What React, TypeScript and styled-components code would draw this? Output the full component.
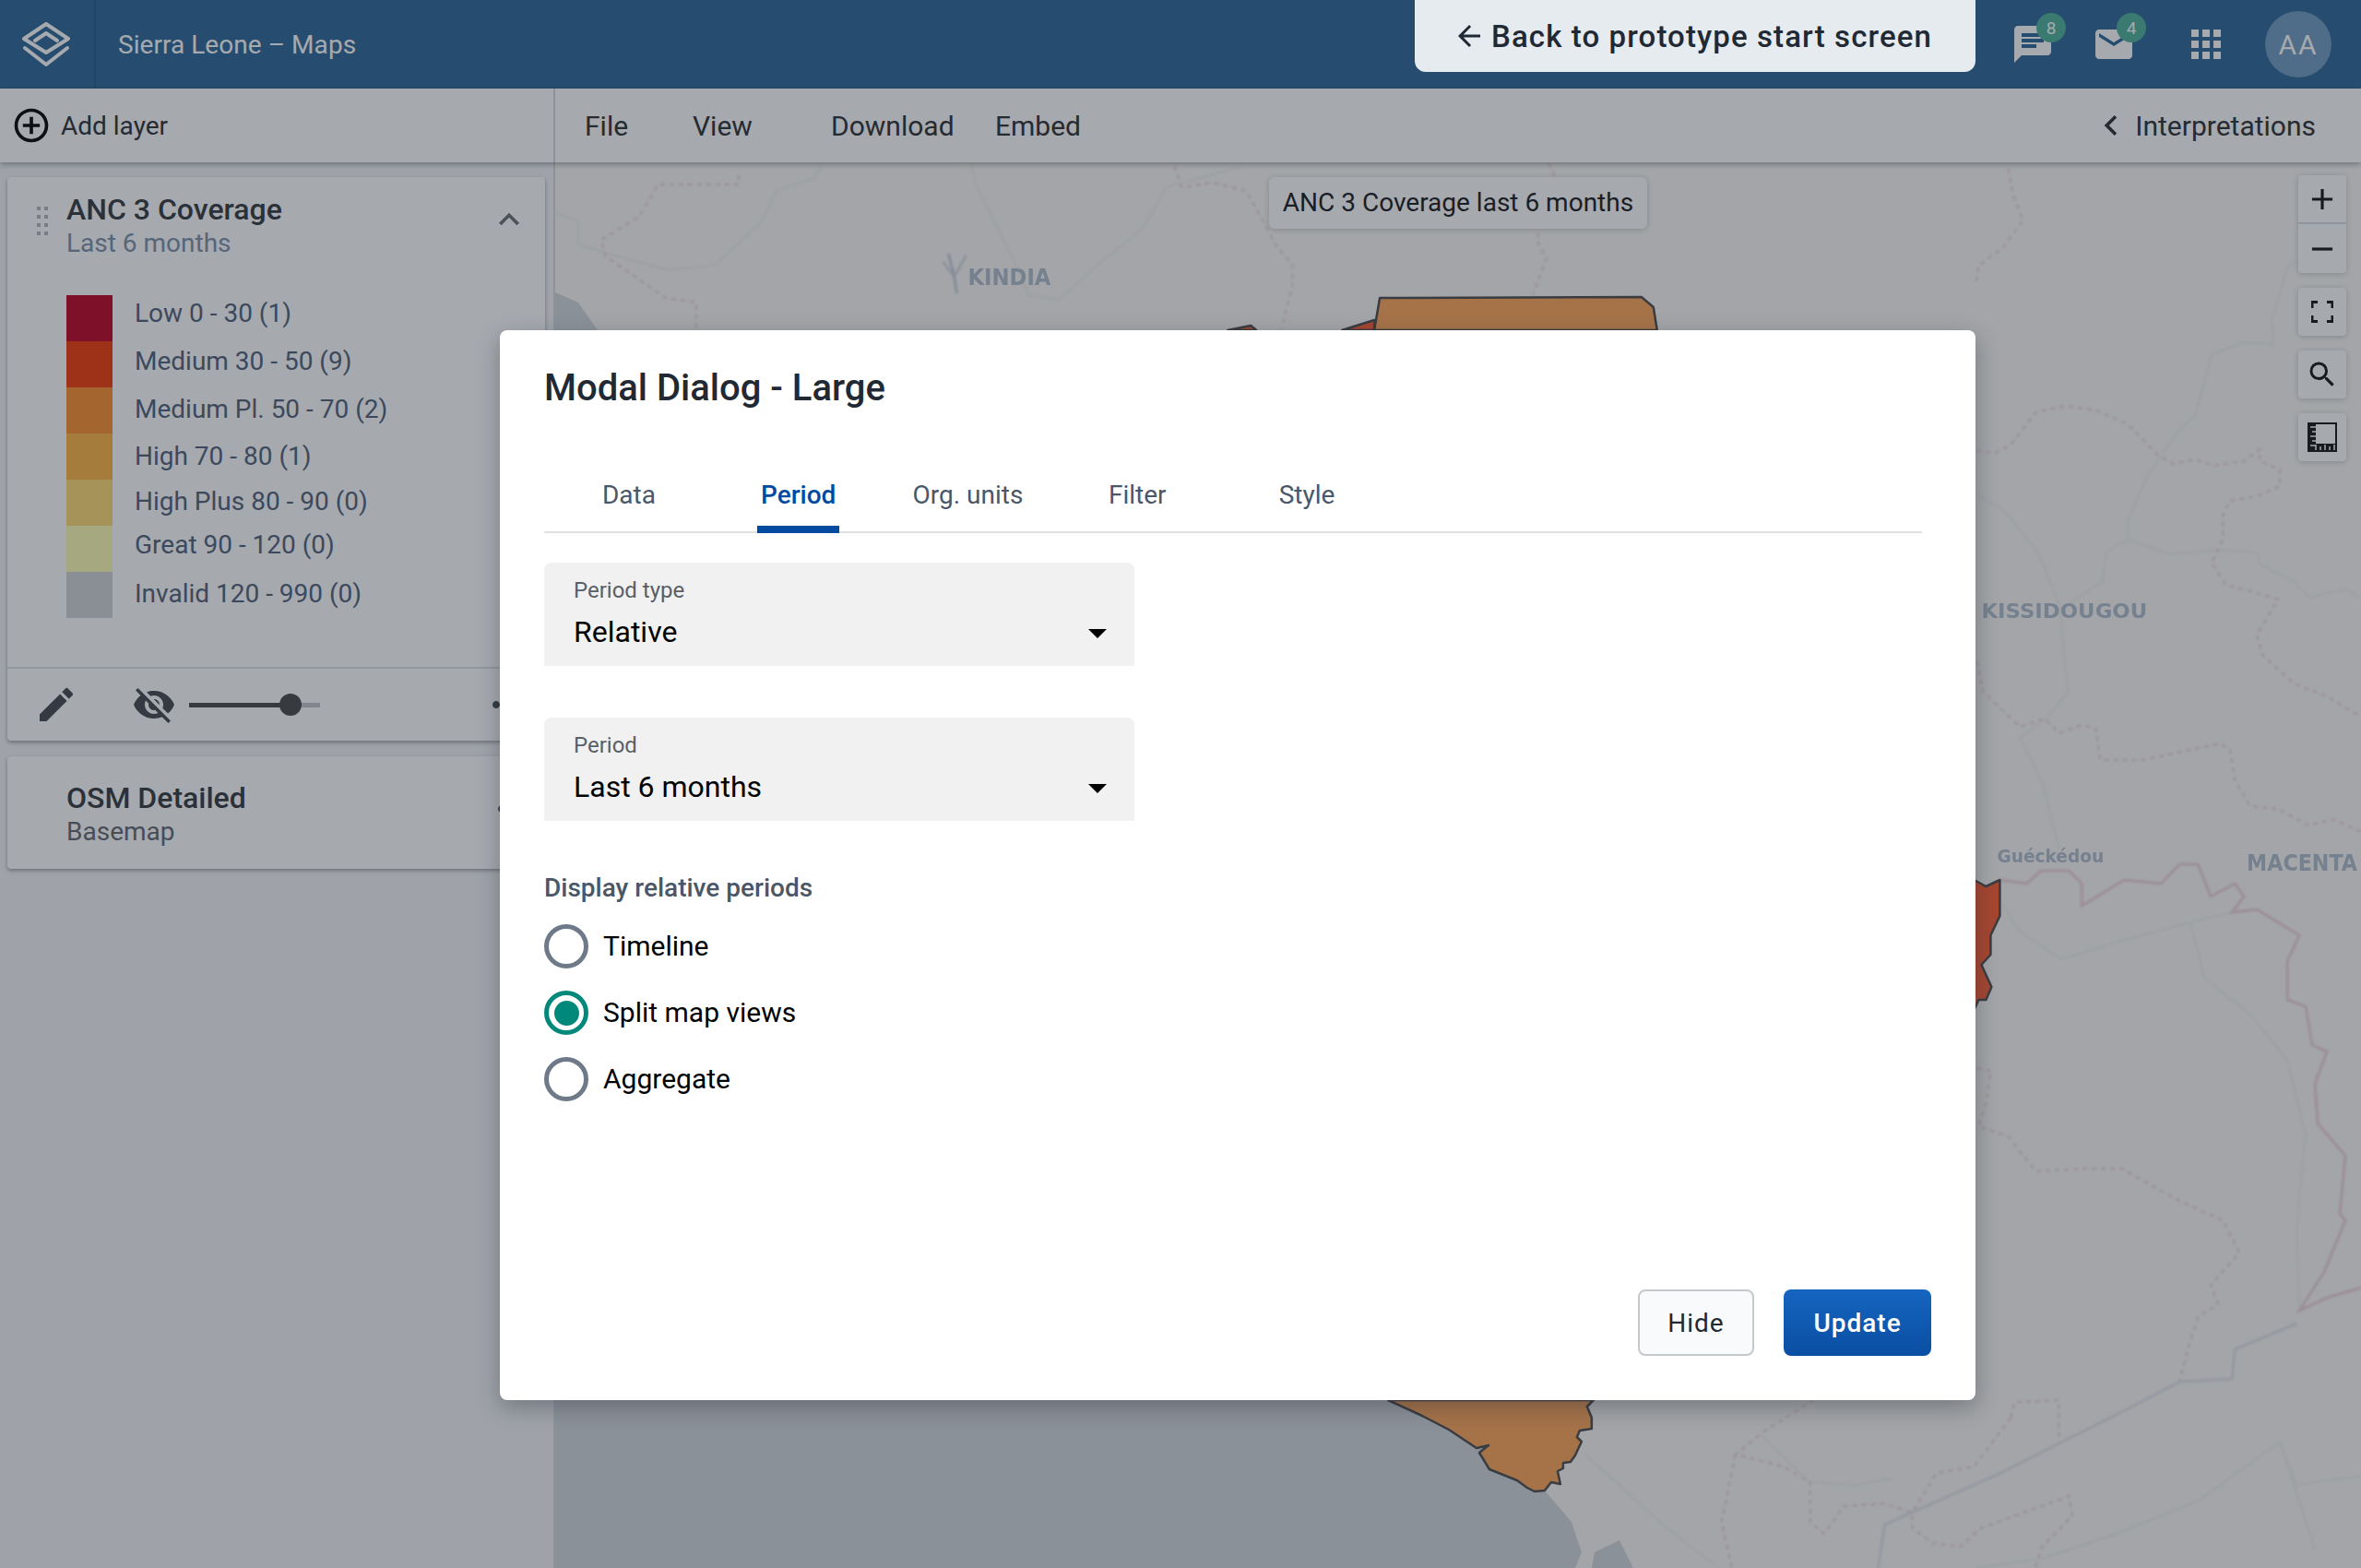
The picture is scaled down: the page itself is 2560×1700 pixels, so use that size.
import React from "react";
import styled, { createGlobalStyle } from "styled-components";
import {
  MdAdd,
  MdAddCircleOutline,
  MdApps,
  MdArrowBack,
  MdChat,
  MdChevronLeft,
  MdEdit,
  MdEmail,
  MdKeyboardArrowUp,
  MdMoreHoriz,
  MdRemove,
  MdSearch,
  MdVisibilityOff,
} from "react-icons/md";

const GlobalStyle = createGlobalStyle`
  html, body {
    margin: 0;
    padding: 0;
    background: #fff;
  }
  * {
    box-sizing: border-box;
  }
`;

const Page = styled.div`
  color: #212934;
  display: flex;
  flex-direction: column;
  font-family: Roboto, "Liberation Sans", sans-serif;
  height: 1700px;
  overflow: hidden;
  position: relative;
  width: 2560px;
`;

const Header = styled.header`
  align-items: center;
  background: #2b6696;
  color: #fff;
  display: flex;
  flex: none;
  height: 96px;
`;

const LogoCell = styled.div`
  align-items: center;
  border-right: 2px solid #245a85;
  display: flex;
  height: 96px;
  justify-content: center;
  padding-right: 2px;
  width: 104px;
`;

const AppTitle = styled.div`
  font-size: 28px;
  letter-spacing: 0.05px;
  margin-left: 24px;
`;

const BackButton = styled.a`
  align-items: center;
  align-self: flex-start;
  background: #e6ebf0;
  border-radius: 0 0 12px 12px;
  color: #212934;
  display: flex;
  font-size: 33px;
  font-weight: 500;
  gap: 6px;
  height: 78px;
  letter-spacing: 1.1px;
  margin-left: auto;
  padding-left: 41px;
  position: relative;
  width: 608px;
  z-index: 20;
`;

const HeaderIcons = styled.div`
  display: flex;
  height: 96px;
  padding-left: 38px;
  position: relative;
  width: 418px;
`;

const IconSlot = styled.div<{ $gap?: number }>`
  align-items: center;
  display: flex;
  flex: none;
  height: 96px;
  margin-left: ${(p) => p.$gap || 0}px;
  position: relative;
  width: 48px;
`;

const Badge = styled.span<{ $left: number }>`
  align-items: center;
  background: #4bb198;
  border-radius: 50%;
  color: #fff;
  display: flex;
  font-size: 19px;
  height: 32px;
  justify-content: center;
  left: ${(p) => p.$left}px;
  position: absolute;
  top: 14px;
  width: 32px;
`;

const Avatar = styled.div`
  align-items: center;
  background: #6e99c0;
  border-radius: 50%;
  color: #fff;
  display: flex;
  flex: none;
  font-size: 30px;
  height: 72px;
  justify-content: center;
  letter-spacing: 2px;
  margin-left: 40px;
  margin-top: 12px;
  width: 72px;
`;

const Toolbar = styled.div`
  background: #fff;
  box-shadow: 0 2px 6px rgba(0, 0, 0, 0.35);
  color: #2a2c30;
  display: flex;
  flex: none;
  font-size: 28px;
  height: 80px;
  position: relative;
  z-index: 2;
`;

const AddLayer = styled.div`
  align-items: center;
  border-right: 2px solid #d8dade;
  display: flex;
  gap: 10px;
  padding-left: 12px;
  width: 602px;
`;

const Menu = styled.div`
  align-items: center;
  display: flex;
  flex: 1;
  font-size: 30px;
  padding-left: 32px;
  padding-right: 49px;
`;

const MenuItem = styled.span<{ $w: number }>`
  width: ${(p) => p.$w}px;
`;

const Interpretations = styled.span`
  align-items: center;
  display: flex;
  gap: 4px;
  margin-left: auto;
`;

const Main = styled.div`
  display: flex;
  flex: 1;
  min-height: 0;
`;

const Sidebar = styled.aside`
  background: #f3f5f7;
  border-right: 2px solid #d8dade;
  display: flex;
  flex: none;
  flex-direction: column;
  gap: 17px;
  padding: 16px 9px 0 8px;
  width: 602px;
`;

const Card = styled.section`
  background: #fff;
  border-radius: 4px;
  box-shadow: 0 2px 4px rgba(0, 0, 0, 0.35);
`;

const CardHead = styled.div`
  align-items: flex-start;
  display: flex;
  padding: 16px 17px 0 32px;
`;

const DragHandle = styled.svg`
  flex: none;
  margin-right: 20px;
  margin-top: 16px;
`;

const CardTitle = styled.div`
  color: #33373d;
  font-size: 32px;
  font-weight: 500;
  line-height: 38px;
`;

const CardSub = styled.div`
  color: #7a8ea8;
  font-size: 28px;
  line-height: 36px;
`;

const CardChevron = styled.div`
  color: #6b6e73;
  display: flex;
  margin-left: auto;
  margin-top: 8px;
`;

const Legend = styled.div`
  display: flex;
  gap: 24px;
  margin-top: 38px;
  padding-left: 64px;
`;

const Swatches = styled.div`
  display: flex;
  flex-direction: column;
  width: 50px;
`;

const Swatch = styled.div<{ $color: string }>`
  background: ${(p) => p.$color};
  height: 50px;
`;

const LegendLabels = styled.div`
  color: #4f6079;
  display: flex;
  flex-direction: column;
  font-size: 28px;
  height: 350px;
  margin-top: -7px;
`;

const LegendLabel = styled.div<{ $h: number }>`
  align-items: center;
  display: flex;
  flex: none;
  height: ${(p) => p.$h}px;
`;

const CardTools = styled.div`
  align-items: center;
  border-top: 2px solid #e0e2e6;
  color: #44474c;
  display: flex;
  height: 80px;
  margin-top: 53px;
  padding: 0 17px 0 29px;
`;

const EyeIcon = styled.div`
  display: flex;
  margin-left: 58px;
`;

const Slider = styled.div`
  background: #c3c3c6;
  height: 5px;
  margin-left: 14px;
  position: relative;
  width: 142px;
`;

const SliderFill = styled.div`
  background: #464646;
  height: 5px;
`;

const SliderThumb = styled.div`
  background: #464646;
  border-radius: 50%;
  height: 24px;
  margin-left: -12px;
  position: absolute;
  top: -10px;
  width: 24px;
`;

const MoreIcon = styled.div<{ $top?: number }>`
  align-self: ${(p) => (p.$top ? "flex-start" : "auto")};
  color: #44474c;
  display: flex;
  margin-left: auto;
  margin-top: ${(p) => p.$top || 0}px;
`;

const BasemapCard = styled(Card)`
  display: flex;
  height: 122px;
  padding: 26px 11px 0 64px;
`;

const BasemapSub = styled.div`
  color: #5f6670;
  font-size: 28px;
  line-height: 36px;
`;

const MapArea = styled.main`
  background: #faf9f6;
  flex: 1;
  position: relative;
`;

const MapDrawing = styled.svg`
  display: block;
  height: 100%;
  left: 0;
  position: absolute;
  top: 0;
  width: 100%;
`;

const SoftGroup = styled.g`
  filter: blur(0.9px);
`;

const LabelGroup = styled.g`
  filter: blur(0.5px);
`;

const MapTitle = styled.div`
  align-items: center;
  background: #fff;
  border-radius: 6px;
  box-shadow: 0 1px 6px rgba(0, 0, 0, 0.2);
  color: #15181c;
  display: flex;
  font-size: 28px;
  height: 56px;
  justify-content: center;
  left: 774px;
  padding-bottom: 2px;
  position: absolute;
  top: 16px;
  width: 410px;
`;

const MapControls = styled.div`
  display: flex;
  flex-direction: column;
  gap: 16px;
  position: absolute;
  right: 16px;
  top: 14px;
  width: 52px;
`;

const ControlGroup = styled.div`
  background: #fff;
  border-radius: 4px;
  box-shadow: 0 1px 6px rgba(0, 0, 0, 0.2);
`;

const ControlButton = styled.div<{ $divider?: boolean; $h?: number }>`
  align-items: center;
  border-bottom: ${(p) => (p.$divider ? "2px solid #dcdfe3" : "none")};
  color: #111;
  display: flex;
  height: ${(p) => p.$h || 52}px;
  justify-content: center;
`;

const Overlay = styled.div`
  background: rgba(33, 41, 52, 0.4);
  inset: 0;
  padding: 358px 0 0 542px;
  position: absolute;
  z-index: 10;
`;

const Dialog = styled.div`
  background: #fff;
  border-radius: 8px;
  box-shadow: 0 8px 24px rgba(33, 41, 52, 0.35);
  display: flex;
  flex-direction: column;
  height: 1160px;
  padding: 41px 48px 48px;
  width: 1600px;
`;

const DialogTitle = styled.h2`
  color: #212934;
  font-size: 40px;
  font-weight: 500;
  line-height: 44px;
  margin: 0;
`;

const Tabs = styled.div`
  box-shadow: inset 0 -2px 0 #e0e0e0;
  display: flex;
  height: 61px;
  margin-right: 10px;
  margin-top: 74px;
`;

const Tab = styled.div`
  display: flex;
  justify-content: center;
  width: 183.8px;
`;

const TabLabel = styled.span<{ $active?: boolean }>`
  border-bottom: 8px solid ${(p) => (p.$active ? "#004ba0" : "transparent")};
  color: ${(p) => (p.$active ? "#004ba0" : "#4a5768")};
  font-size: 28px;
  font-weight: ${(p) => (p.$active ? 500 : 400)};
  height: 61px;
  line-height: 40px;
  padding: 0 4px;
`;

const SelectBox = styled.div<{ $top: number }>`
  background: #f1f1f1;
  border-radius: 8px 8px 0 0;
  flex: none;
  height: 112px;
  margin-top: ${(p) => p.$top}px;
  padding: 16px 30px 0 32px;
  width: 640px;
`;

const SelectLabel = styled.div`
  color: #5a5f66;
  font-size: 24px;
  line-height: 28px;
`;

const SelectValueRow = styled.div`
  align-items: center;
  color: #000;
  display: flex;
  font-size: 32px;
  justify-content: space-between;
  line-height: 40px;
  margin-top: 11px;
`;

const ArrowShape = styled.svg`
  margin-top: 4px;
`;

const FieldLabel = styled.div`
  color: #4a5768;
  font-size: 28px;
  font-weight: 500;
  line-height: 36px;
  margin-top: 55px;
`;

const RadioList = styled.div`
  display: flex;
  flex-direction: column;
  gap: 24px;
  margin-top: 21px;
`;

const RadioRow = styled.label`
  align-items: center;
  color: #000;
  display: flex;
  font-size: 30px;
  gap: 16px;
  height: 48px;
  line-height: 46px;
`;

const RadioDot = styled.span<{ $checked?: boolean }>`
  align-items: center;
  border: 5px solid ${(p) => (p.$checked ? "#00897b" : "#6e7a8a")};
  border-radius: 50%;
  display: flex;
  height: 48px;
  justify-content: center;
  width: 48px;

  &::after {
    background: #00897b;
    border-radius: 50%;
    content: "";
    display: ${(p) => (p.$checked ? "block" : "none")};
    height: 27px;
    width: 27px;
  }
`;

const DialogActions = styled.div`
  display: flex;
  gap: 32px;
  justify-content: flex-end;
  margin-top: auto;
`;

const HideButton = styled.button`
  background: #f9fafb;
  border: 2px solid #c4c9cc;
  border-radius: 8px;
  color: #212934;
  font-family: inherit;
  font-size: 28px;
  height: 72px;
  letter-spacing: 1px;
  width: 126px;
`;

const UpdateButton = styled.button`
  background: linear-gradient(180deg, #1565c0 0%, #0a4ea2 100%);
  border: 0;
  border-radius: 8px;
  color: #fff;
  font-family: inherit;
  font-size: 28px;
  font-weight: 500;
  height: 72px;
  letter-spacing: 1px;
  width: 160px;
`;

const legend = [
  { color: "#be0023", label: "Low 0 - 30 (1)", h: 52 },
  { color: "#f23905", label: "Medium 30 - 50 (9)", h: 52 },
  { color: "#fd8e2a", label: "Medium Pl. 50 - 70 (2)", h: 52 },
  { color: "#ffb441", label: "High 70 - 80 (1)", h: 50 },
  { color: "#ffda73", label: "High Plus 80 - 90 (0)", h: 48 },
  { color: "#ffffb2", label: "Great 90 - 120 (0)", h: 46 },
  { color: "#d0d2d5", label: "Invalid 120 - 990 (0)", h: 60 },
];

const roads = [
  "890,177 882,193 840,207 824,240 774,287 724,293 675,280 625,265 625,240 600,230",
  "1052,177 1056,200 1097,280 1114,320 1147,325 1189,287 1238,247 1263,203 1346,180",
  "2493,282 2480,290 2463,349 2465,373 2433,371 2398,384 2380,451 2360,469 2327,518 2307,563 2307,585 2283,599 2280,630 2233,661 2242,750 2220,777",
  "2307,585 2353,601 2403,596 2447,599 2450,612 2487,630 2503,648 2543,639 2560,648",
  "2143,536 2173,554 2210,599 2233,657",
  "2220,777 2190,800 2215,850 2232,920",
  "2420,989 2375,1000 2300,1020 2235,1040 2190,1010 2170,980",
  "2375,1000 2390,1060 2440,1100 2480,1150 2500,1230 2490,1330 2493,1421",
  "1910,1557 1962,1607 2014,1610 2051,1603",
  "2472,1563 2384,1627 2302,1660 2214,1690 2140,1700",
  "1718,1577 1807,1657 1859,1697",
  "2560,1600 2490,1610 2472,1563 2510,1680",
];

const districts = [
  "799,190 799,200 712,200 704,213 691,235 650,260 654,277 720,323 753,328 753,358",
  "1272,180 1280,203 1313,198 1350,207 1383,267 1400,287 1400,310 1388,357",
  "1678,177 1686,193 1665,260 1676,280 1661,320",
  "2177,183 2182,210 2193,239 2172,268 2145,288 2142,308",
  "2143,489 2163,491 2180,482 2207,447 2240,440 2273,445 2307,460 2340,494 2357,503 2380,498 2400,505 2433,500 2450,487 2450,500 2472,509 2472,527 2447,538 2418,543 2410,558 2410,585 2398,610 2413,634 2440,641 2470,650 2447,688 2453,710 2487,741 2523,755 2560,777",
  "2143,717 2150,750 2190,788 2217,779 2232,795 2257,786 2272,790 2277,824 2323,824 2407,806 2418,813 2423,846 2440,874 2470,877 2503,895 2530,888 2560,902",
  "2143,1158 2158,1161 2153,1196 2145,1221 2177,1232 2207,1270 2260,1267 2300,1267 2363,1302 2410,1323 2428,1358 2397,1393 2405,1414 2383,1428 2370,1470 2363,1498",
  "1966,1518 1910,1553 1881,1577 1933,1590 1962,1607 1962,1650 1977,1663 1999,1633 2043,1630 2073,1640 2073,1657 2095,1673 2125,1677 2147,1657 2243,1622 2247,1643 2214,1677 2206,1700",
  "1881,1577 1866,1650 1877,1700",
  "2180,1537 2184,1520 2232,1518 2232,1563",
  "2180,1537 2140,1590 2099,1597 2073,1640",
];

const border =
  "2168,954 2197,958 2213,944 2243,944 2257,958 2257,982 2303,954 2343,958 2363,937 2383,937 2397,972 2423,958 2433,972 2420,989 2447,986 2493,1014 2480,1042 2480,1084 2500,1091 2507,1133 2523,1140 2510,1175 2513,1218 2543,1253 2537,1316 2543,1323 2520,1379 2493,1421 2523,1407 2560,1396";

const guineaBorder =
  "2490,1435 2423,1463 2420,1495 2363,1498 2310,1526 2240,1561 2169,1597 2043,1653 2036,1700";

const southCoast =
  "1504,1518 1541,1535 1570,1550 1600,1570 1613,1567 1603,1575 1614,1593 1644,1605 1655,1613 1663,1617 1674,1616";

function LogoMark() {
  return (
    <svg width="52" height="48" viewBox="0 0 52 48" fill="none" stroke="#fff" strokeWidth="4" strokeLinejoin="round" strokeLinecap="round">
      <path d="M26 2 50 18 26 33 2 18Z" />
      <path d="M14 20 26 12 38 20" />
      <path d="M3 28 26 46 49 28" />
    </svg>
  );
}

function FullscreenGlyph() {
  return (
    <svg width="24" height="24" viewBox="0 0 24 24" fill="none" stroke="#111" strokeWidth="3">
      <path d="M1 8V1.5H7M17 1.5H23V8M23 16V22.5H17M7 22.5H1V16" />
    </svg>
  );
}

function MeasureGlyph() {
  return (
    <svg width="32" height="32" viewBox="0 0 32 32">
      <path d="M0 0H32V32H0Z" fill="#111" />
      <path d="M9 2H30V23H9Z" fill="#fff" />
      <path d="M3 5H9M5 10H9M3 15H9M5 20H9M3 25H9M9 24V30M14 26V30M19 24V30M24 26V30M29 24V30" stroke="#fff" strokeWidth="1.5" />
    </svg>
  );
}

function DropArrow() {
  return (
    <ArrowShape width="20" height="10" viewBox="0 0 20 10">
      <path d="M0 0H20L10 10Z" fill="#000" />
    </ArrowShape>
  );
}

function Select({ label, value, top }: { label: string; value: string; top: number }) {
  return (
    <SelectBox $top={top}>
      <SelectLabel>{label}</SelectLabel>
      <SelectValueRow>
        {value}
        <DropArrow />
      </SelectValueRow>
    </SelectBox>
  );
}

function MapBackground() {
  return (
    <MapDrawing viewBox="600 176 1960 1524" preserveAspectRatio="none">
      <path d="M600 317 625 328 646 358H600Z" fill="#d2d7dc" />
      <path d={`M600 1518L${southCoast} 1703,1650 1714,1683 1707,1700H600Z`} fill="#d2d7dc" />
      <path d="M1725 1700 1728 1683 1755 1670 1770 1700Z" fill="#d2d7dc" />
      <SoftGroup fill="none">
        {roads.map((points) => (
          <polyline key={points} points={points} stroke="#f0f0ec" strokeWidth="2" />
        ))}
        {districts.map((points) => (
          <polyline key={points} points={points} stroke="#f0d8dc" strokeWidth="2.5" strokeDasharray="5 5" />
        ))}
        <polyline points={border} stroke="#efd2d8" strokeWidth="3" />
        <polyline points={guineaBorder} stroke="#e2e3e9" strokeWidth="3" />
        <polyline points="1027,275 1033,300 1036,318" stroke="#c6cfd8" strokeWidth="3" />
        <polyline points="1021,284 1033,300 1046,277" stroke="#c6cfd8" strokeWidth="2" />
      </SoftGroup>
      <g stroke="#4a4a4a" strokeWidth="2.5" strokeLinejoin="round">
        <path d="M1495 323 1779 322 1792 333 1796 358H1489Z" fill="#ffa558" />
        <path d="M1454 358 1489 347V358Z" fill="#fd5a30" />
        <path d="M1330 358 1355 353 1361 358Z" fill="#fd5a30" />
        <path d="M2140 954 2153 961 2168 954V993L2158 1014V1035L2148 1046 2159 1070 2153 1084H2145L2140 1095Z" fill="#fd5a30" />
        <path d={`M${southCoast} 1681,1607 1691,1609 1688,1595 1694,1592 1694,1586 1702,1585 1707,1578 1714,1563 1709,1558 1712,1551 1725,1549 1725,1537 1720,1525 1727,1518Z`} fill="#ffa558" />
      </g>
      <LabelGroup fontFamily="'DejaVu Sans', sans-serif" fontWeight="700" fill="#b0bccb">
        <text x="1048" y="309" fontSize="24" textLength="90" lengthAdjust="spacingAndGlyphs">KINDIA</text>
        <text x="2148" y="670" fontSize="22" textLength="180" lengthAdjust="spacingAndGlyphs">KISSIDOUGOU</text>
        <text x="2165" y="935" fontSize="19" textLength="116" lengthAdjust="spacingAndGlyphs">Guéckédou</text>
        <text x="2436" y="944" fontSize="24" textLength="120" lengthAdjust="spacingAndGlyphs">MACENTA</text>
      </LabelGroup>
    </MapDrawing>
  );
}

export default function App() {
  return (
    <Page>
      <GlobalStyle />
      <Header>
        <LogoCell>
          <LogoMark />
        </LogoCell>
        <AppTitle>Sierra Leone – Maps</AppTitle>
        <BackButton>
          <MdArrowBack size={36} />
          Back to prototype start screen
        </BackButton>
        <HeaderIcons>
          <IconSlot>
            <MdChat size={48} />
            <Badge $left={28}>8</Badge>
          </IconSlot>
          <IconSlot $gap={40}>
            <MdEmail size={48} />
            <Badge $left={27}>4</Badge>
          </IconSlot>
          <IconSlot $gap={52}>
            <MdApps size={48} />
          </IconSlot>
          <Avatar>AA</Avatar>
        </HeaderIcons>
      </Header>

      <Toolbar>
        <AddLayer>
          <MdAddCircleOutline size={44} color="#000" />
          Add layer
        </AddLayer>
        <Menu>
          <MenuItem $w={117}>File</MenuItem>
          <MenuItem $w={150}>View</MenuItem>
          <MenuItem $w={178}>Download</MenuItem>
          <MenuItem $w={100}>Embed</MenuItem>
          <Interpretations>
            <MdChevronLeft size={44} />
            Interpretations
          </Interpretations>
        </Menu>
      </Toolbar>

      <Main>
        <Sidebar>
          <Card>
            <CardHead>
              <DragHandle width="12" height="32" viewBox="0 0 12 32" fill="#b3b6bb">
                {[0, 9, 18, 27].map((y) => (
                  <React.Fragment key={y}>
                    <rect x="0" y={y} width="4" height="4" />
                    <rect x="8" y={y} width="4" height="4" />
                  </React.Fragment>
                ))}
              </DragHandle>
              <div>
                <CardTitle>ANC 3 Coverage</CardTitle>
                <CardSub>Last 6 months</CardSub>
              </div>
              <CardChevron>
                <MdKeyboardArrowUp size={44} />
              </CardChevron>
            </CardHead>
            <Legend>
              <Swatches>
                {legend.map((item) => (
                  <Swatch key={item.label} $color={item.color} />
                ))}
              </Swatches>
              <LegendLabels>
                {legend.map((item) => (
                  <LegendLabel key={item.label} $h={item.h}>
                    {item.label}
                  </LegendLabel>
                ))}
              </LegendLabels>
            </Legend>
            <CardTools>
              <MdEdit size={48} />
              <EyeIcon>
                <MdVisibilityOff size={48} />
              </EyeIcon>
              <Slider>
                <SliderFill style={{ width: 110 }} />
                <SliderThumb style={{ left: 110 }} />
              </Slider>
              <MoreIcon>
                <MdMoreHoriz size={48} />
              </MoreIcon>
            </CardTools>
          </Card>
          <BasemapCard>
            <div>
              <CardTitle>OSM Detailed</CardTitle>
              <BasemapSub>Basemap</BasemapSub>
            </div>
            <MoreIcon $top={7}>
              <MdMoreHoriz size={48} />
            </MoreIcon>
          </BasemapCard>
        </Sidebar>

        <MapArea>
          <MapBackground />
          <MapTitle>ANC 3 Coverage last 6 months</MapTitle>
          <MapControls>
            <ControlGroup>
              <ControlButton $divider $h={53}>
                <MdAdd size={38} />
              </ControlButton>
              <ControlButton $h={53}>
                <MdRemove size={38} />
              </ControlButton>
            </ControlGroup>
            <ControlGroup>
              <ControlButton>
                <FullscreenGlyph />
              </ControlButton>
            </ControlGroup>
            <ControlGroup>
              <ControlButton>
                <MdSearch size={36} />
              </ControlButton>
            </ControlGroup>
            <ControlGroup>
              <ControlButton>
                <MeasureGlyph />
              </ControlButton>
            </ControlGroup>
          </MapControls>
        </MapArea>
      </Main>

      <Overlay>
        <Dialog>
          <DialogTitle>Modal Dialog - Large</DialogTitle>
          <Tabs>
            <Tab><TabLabel>Data</TabLabel></Tab>
            <Tab><TabLabel $active>Period</TabLabel></Tab>
            <Tab><TabLabel>Org. units</TabLabel></Tab>
            <Tab><TabLabel>Filter</TabLabel></Tab>
            <Tab><TabLabel>Style</TabLabel></Tab>
          </Tabs>
          <Select label="Period type" value="Relative" top={32} />
          <Select label="Period" value="Last 6 months" top={56} />
          <FieldLabel>Display relative periods</FieldLabel>
          <RadioList>
            <RadioRow><RadioDot />Timeline</RadioRow>
            <RadioRow><RadioDot $checked />Split map views</RadioRow>
            <RadioRow><RadioDot />Aggregate</RadioRow>
          </RadioList>
          <DialogActions>
            <HideButton>Hide</HideButton>
            <UpdateButton>Update</UpdateButton>
          </DialogActions>
        </Dialog>
      </Overlay>
    </Page>
  );
}
